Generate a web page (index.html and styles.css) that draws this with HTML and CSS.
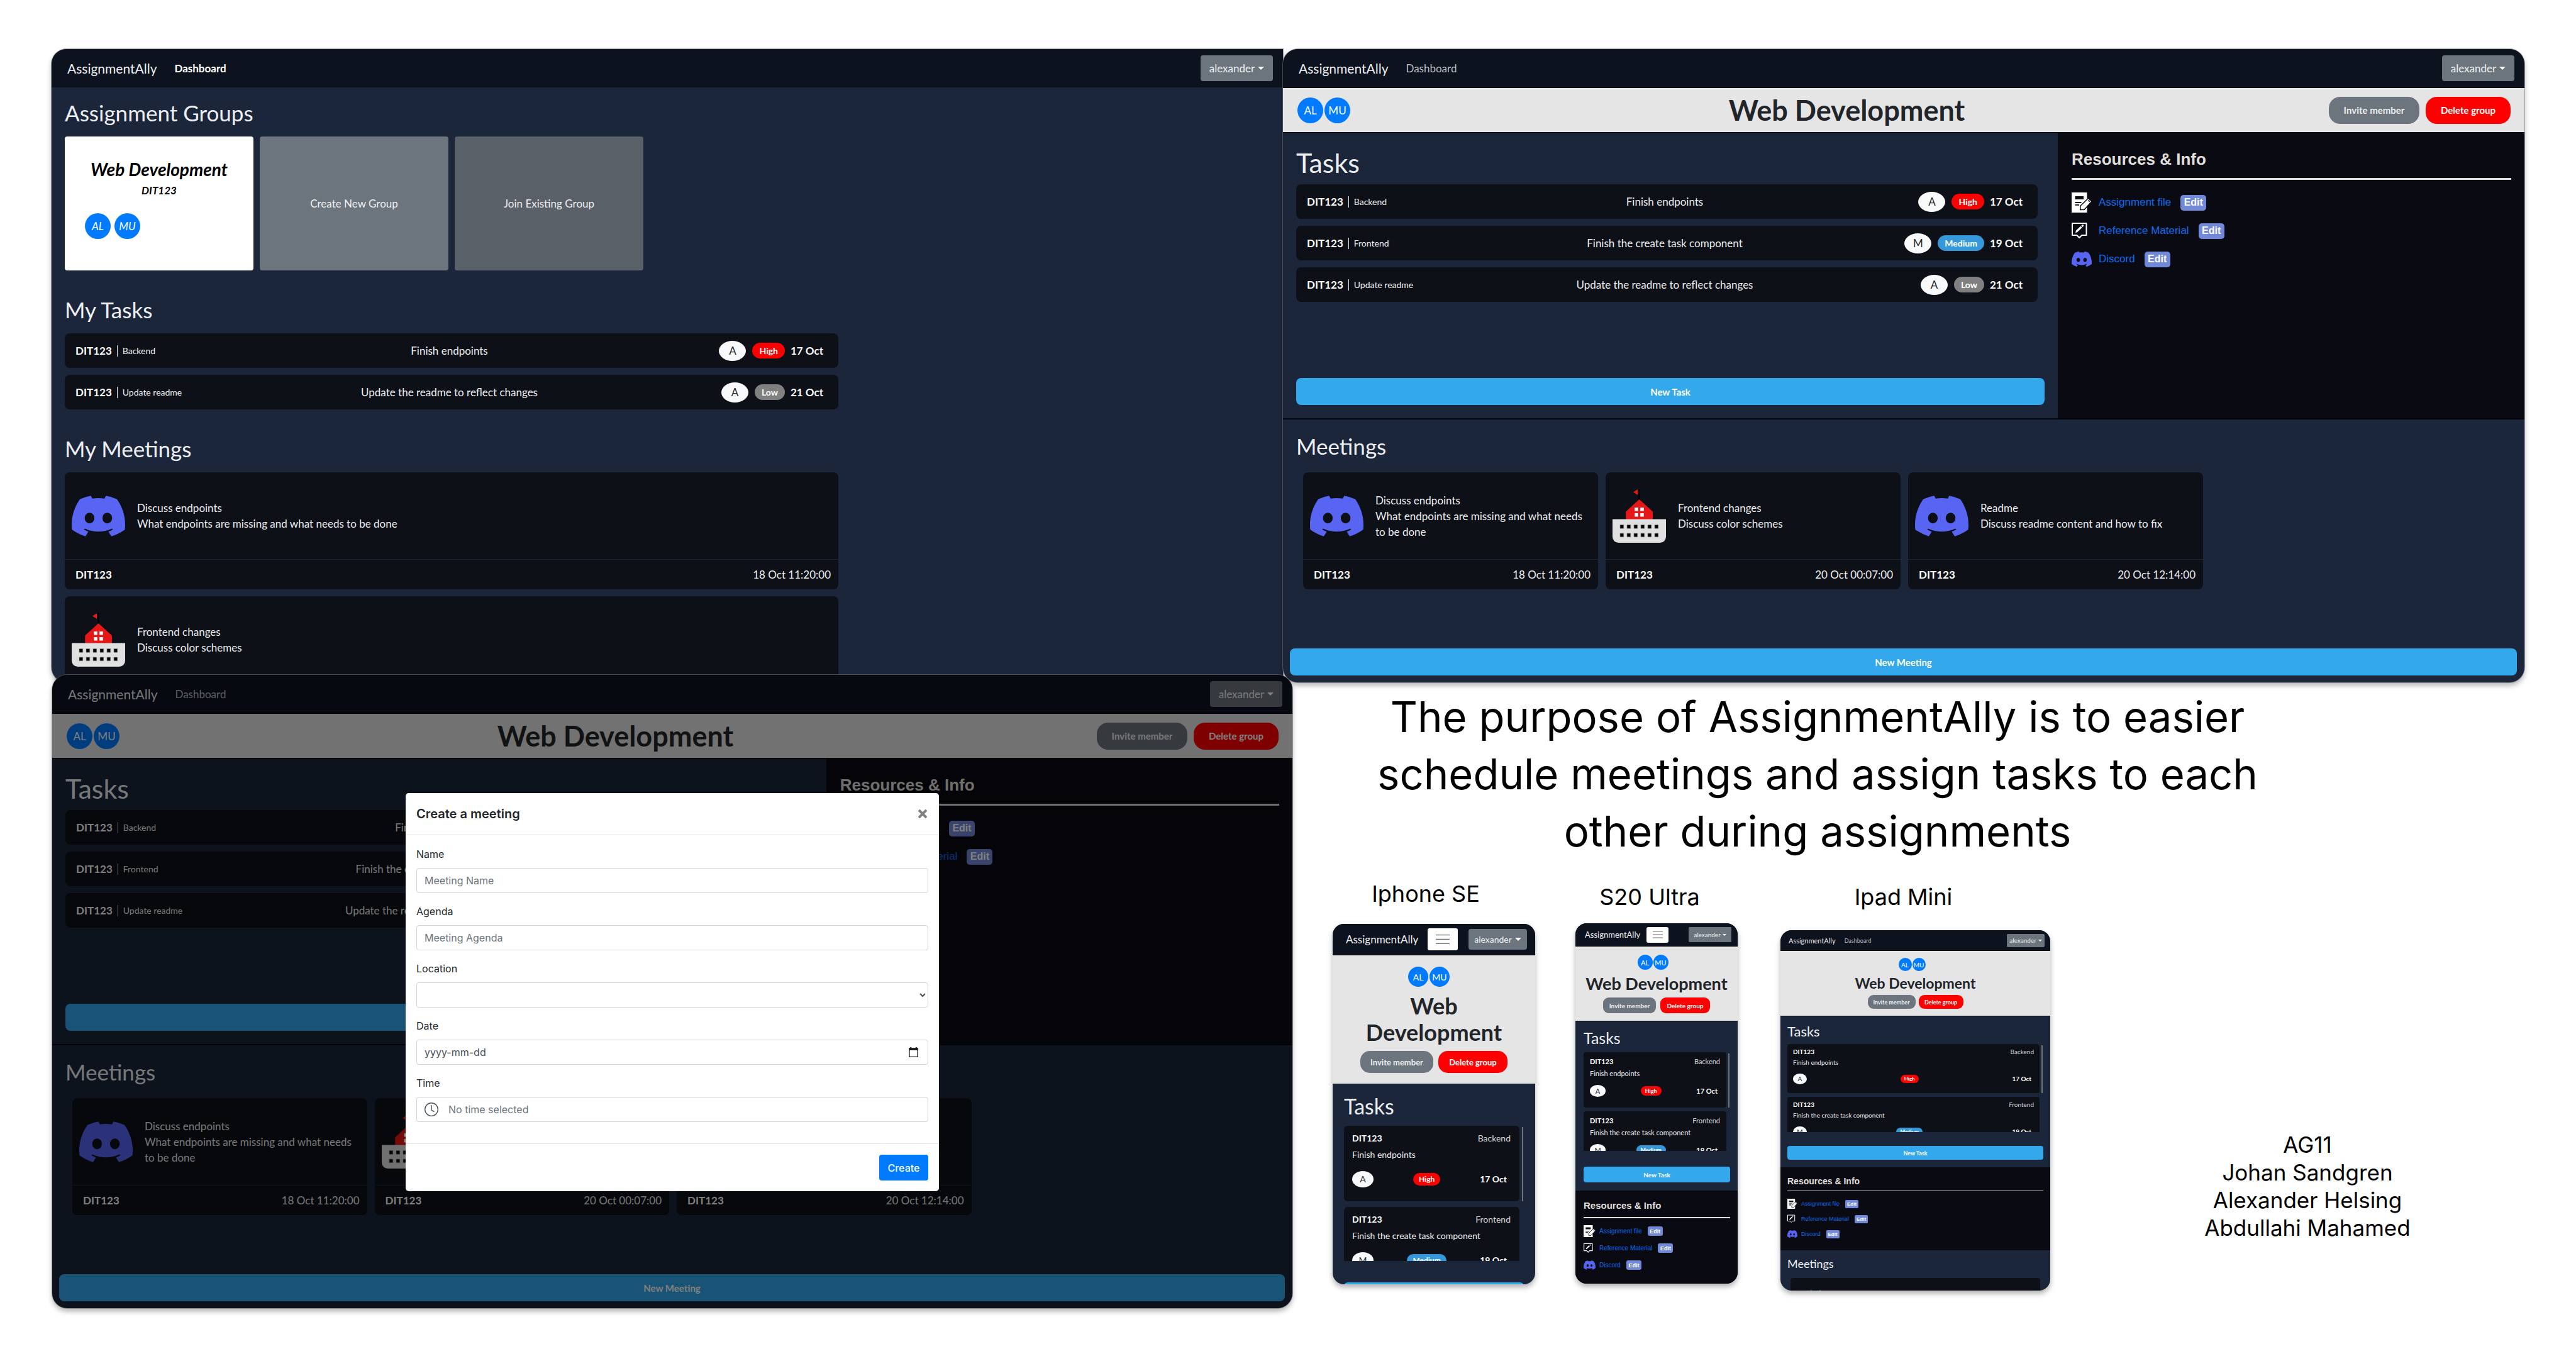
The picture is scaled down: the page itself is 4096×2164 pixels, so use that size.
FILE: index.html
```html
<!DOCTYPE html>
<html lang="en">
<head>
<meta charset="utf-8">
<meta name="viewport" content="width=device-width, initial-scale=1">
<title>AssignmentAlly</title>
<link rel="stylesheet" href="styles.css">
</head>
<body>
<svg class="sprite" aria-hidden="true">
  <symbol id="discord" viewBox="0 0 127.14 96.36"><path fill="#5865f2" d="M107.7,8.07A105.15,105.15,0,0,0,81.47,0a72.06,72.06,0,0,0-3.36,6.83A97.68,97.68,0,0,0,49,6.83,72.37,72.37,0,0,0,45.64,0,105.89,105.89,0,0,0,19.39,8.09C2.79,32.65-1.71,56.6.54,80.21h0A105.73,105.73,0,0,0,32.71,96.36,77.7,77.7,0,0,0,39.6,85.25a68.42,68.42,0,0,1-10.85-5.18c.91-.66,1.8-1.34,2.66-2a75.57,75.57,0,0,0,64.32,0c.87.71,1.76,1.39,2.66,2a68.68,68.68,0,0,1-10.87,5.19,77,77,0,0,0,6.89,11.1A105.25,105.25,0,0,0,126.6,80.22h0C129.24,52.84,122.09,29.11,107.7,8.07ZM42.45,65.69C36.18,65.69,31,60,31,53s5-12.74,11.43-12.74S54,46,53.89,53,48.84,65.69,42.45,65.69Zm42.24,0C78.41,65.69,73.25,60,73.25,53s5-12.74,11.44-12.74S96.23,46,96.12,53,91.08,65.69,84.69,65.69Z"/></symbol>
  <symbol id="school" viewBox="0 0 340 340">
    <path fill="#000" d="M165 0h10v66h-10z"/>
    <path fill="#e61717" d="M160 0v36l-28-18zM170 64l86 78v50H85v-50z"/>
    <path fill="#fff" d="M141 116h22v22h-22zM177 116h22v22h-22zM141 152h22v22h-22zM177 152h22v22h-22z"/>
    <path fill="#e0e0e0" d="M0 190h340v112a38 38 0 0 1-38 38H38a38 38 0 0 1-38-38z"/>
    <path fill="#000" stroke="#8a8a8a" stroke-width="3" d="M48 226h23v23H48zM92 226h23v23H92zM136 226h23v23h-23zM180 226h23v23h-23zM224 226h23v23h-23zM268 226h23v23h-23zM48 280h23v23H48zM92 280h23v23H92zM136 280h23v23h-23zM180 280h23v23h-23zM224 280h23v23h-23zM268 280h23v23h-23z"/>
  </symbol>
  <symbol id="file" viewBox="0 0 128 128">
    <path fill="#fff" d="M0 0h98v128H0z"/>
    <path fill="#0a0a12" d="M22 24h54v20H22zM22 60h40v8H22zM22 76h26v7H22z"/>
    <path fill="#fff" stroke="#0a0a12" stroke-width="6" d="M106 37l22 20-48 53H55V86z"/>
    <path fill="#0a0a12" d="M108 47l10 9-5 5-9-9z"/>
  </symbol>
  <symbol id="reference" viewBox="0 0 128 128">
    <path fill="none" stroke="#fff" stroke-width="8" stroke-linejoin="round" d="M4 16h90v76H65L49 108 33 92H4z"/>
    <path fill="#fff" d="M24 78l4-16 30-28 9 9-29 28zM61 31l6-6q5-3 8 1t0 9l-5 5z"/>
  </symbol>
  <symbol id="clock" viewBox="0 0 16 16"><path fill="#495057" fill-rule="evenodd" d="M8 15A7 7 0 1 0 8 1a7 7 0 0 0 0 14m8-7A8 8 0 1 1 0 8a8 8 0 0 1 16 0M7.500 3h1v5.500l3 1.700-.5.900-3.500-2z"/></symbol>
  <symbol id="calendar" viewBox="0 0 22 24"><path fill="#111" fill-rule="evenodd" d="M3 0h3v2h10V0h3v2h3v22H0V2h3zM2 7v15h18V7z"/></symbol>
</svg>

<main class="board">

  <section class="screen window window-dashboard">
    <nav class="navbar">
      <a class="brand" href="#">AssignmentAlly</a>
      <a class="nav-link active" href="#">Dashboard</a>
      <button class="user-btn" type="button">alexander</button>
    </nav>
    <div class="dashboard">
      <h2>Assignment Groups</h2>
      <div class="groups">
        <article class="group-card">
          <h3>Web Development</h3>
          <p>DIT123</p>
          <div class="members"><span>AL</span><span>MU</span></div>
        </article>
        <button class="group-card create" type="button">Create New Group</button>
        <button class="group-card join" type="button">Join Existing Group</button>
      </div>
      <h2>My Tasks</h2>
      <ul class="task-list">
        <li class="task"><div class="course"><b>DIT123</b><i></i><small>Backend</small></div><p>Finish endpoints</p><div class="meta"><span class="avatar">A</span><span class="badge high">High</span><b>17 Oct</b></div></li>
        <li class="task"><div class="course"><b>DIT123</b><i></i><small>Update readme</small></div><p>Update the readme to reflect changes</p><div class="meta"><span class="avatar">A</span><span class="badge low">Low</span><b>21 Oct</b></div></li>
      </ul>
      <h2>My Meetings</h2>
      <div class="meeting-stack">
        <article class="meeting">
          <div class="meeting-body"><svg class="place"><use href="#discord"/></svg><div><p>Discuss endpoints</p><p>What endpoints are missing and what needs to be done</p></div></div>
          <footer><b>DIT123</b><span>18 Oct 11:20:00</span></footer>
        </article>
        <article class="meeting">
          <div class="meeting-body"><svg class="place"><use href="#school"/></svg><div><p>Frontend changes</p><p>Discuss color schemes</p></div></div>
        </article>
      </div>
    </div>
  </section>

  <section class="screen window window-group">
    <nav class="navbar">
      <a class="brand" href="#">AssignmentAlly</a>
      <a class="nav-link" href="#">Dashboard</a>
      <button class="user-btn" type="button">alexander</button>
    </nav>
    <header class="group-header">
      <div class="members"><span>AL</span><span>MU</span></div>
      <h1>Web Development</h1>
      <div class="actions"><button class="pill invite" type="button">Invite member</button><button class="pill delete" type="button">Delete group</button></div>
    </header>
    <div class="workspace">
      <section class="tasks">
        <h2 class="tasks-title">Tasks</h2>
        <ul class="task-list">
          <li class="task"><div class="course"><b>DIT123</b><i></i><small>Backend</small></div><p>Finish endpoints</p><div class="meta"><span class="avatar">A</span><span class="badge high">High</span><b>17 Oct</b></div></li>
          <li class="task"><div class="course"><b>DIT123</b><i></i><small>Frontend</small></div><p>Finish the create task component</p><div class="meta"><span class="avatar">M</span><span class="badge medium">Medium</span><b>19 Oct</b></div></li>
          <li class="task"><div class="course"><b>DIT123</b><i></i><small>Update readme</small></div><p>Update the readme to reflect changes</p><div class="meta"><span class="avatar">A</span><span class="badge low">Low</span><b>21 Oct</b></div></li>
        </ul>
        <button class="wide-btn" type="button">New Task</button>
      </section>
      <aside class="resources">
        <h3>Resources &amp; Info</h3>
        <ul>
          <li><svg><use href="#file"/></svg><a href="#">Assignment file</a><button type="button">Edit</button></li>
          <li><svg><use href="#reference"/></svg><a href="#">Reference Material</a><button type="button">Edit</button></li>
          <li><svg><use href="#discord"/></svg><a href="#">Discord</a><button type="button">Edit</button></li>
        </ul>
      </aside>
    </div>
    <section class="meetings">
      <h2>Meetings</h2>
      <div class="meeting-row">
        <article class="meeting">
          <div class="meeting-body"><svg class="place"><use href="#discord"/></svg><div><p>Discuss endpoints</p><p>What endpoints are missing and what needs to be done</p></div></div>
          <footer><b>DIT123</b><span>18 Oct 11:20:00</span></footer>
        </article>
        <article class="meeting">
          <div class="meeting-body"><svg class="place"><use href="#school"/></svg><div><p>Frontend changes</p><p>Discuss color schemes</p></div></div>
          <footer><b>DIT123</b><span>20 Oct 00:07:00</span></footer>
        </article>
        <article class="meeting">
          <div class="meeting-body"><svg class="place"><use href="#discord"/></svg><div><p>Readme</p><p>Discuss readme content and how to fix</p></div></div>
          <footer><b>DIT123</b><span>20 Oct 12:14:00</span></footer>
        </article>
      </div>
      <button class="wide-btn" type="button">New Meeting</button>
    </section>
  </section>

  <section class="screen window window-modal">
    <nav class="navbar">
      <a class="brand" href="#">AssignmentAlly</a>
      <a class="nav-link" href="#">Dashboard</a>
      <button class="user-btn" type="button">alexander</button>
    </nav>
    <header class="group-header">
      <div class="members"><span>AL</span><span>MU</span></div>
      <h1>Web Development</h1>
      <div class="actions"><button class="pill invite" type="button">Invite member</button><button class="pill delete" type="button">Delete group</button></div>
    </header>
    <div class="workspace">
      <section class="tasks">
        <h2 class="tasks-title">Tasks</h2>
        <ul class="task-list">
          <li class="task"><div class="course"><b>DIT123</b><i></i><small>Backend</small></div><p>Finish endpoints</p><div class="meta"><span class="avatar">A</span><span class="badge high">High</span><b>17 Oct</b></div></li>
          <li class="task"><div class="course"><b>DIT123</b><i></i><small>Frontend</small></div><p>Finish the create task component</p><div class="meta"><span class="avatar">M</span><span class="badge medium">Medium</span><b>19 Oct</b></div></li>
          <li class="task"><div class="course"><b>DIT123</b><i></i><small>Update readme</small></div><p>Update the readme to reflect changes</p><div class="meta"><span class="avatar">A</span><span class="badge low">Low</span><b>21 Oct</b></div></li>
        </ul>
        <button class="wide-btn" type="button">New Task</button>
      </section>
      <aside class="resources">
        <h3>Resources &amp; Info</h3>
        <ul>
          <li><svg><use href="#file"/></svg><a href="#">Assignment file</a><button type="button">Edit</button></li>
          <li><svg><use href="#reference"/></svg><a href="#">Reference Material</a><button type="button">Edit</button></li>
        </ul>
      </aside>
    </div>
    <section class="meetings">
      <h2>Meetings</h2>
      <div class="meeting-row">
        <article class="meeting">
          <div class="meeting-body"><svg class="place"><use href="#discord"/></svg><div><p>Discuss endpoints</p><p>What endpoints are missing and what needs to be done</p></div></div>
          <footer><b>DIT123</b><span>18 Oct 11:20:00</span></footer>
        </article>
        <article class="meeting">
          <div class="meeting-body"><svg class="place"><use href="#school"/></svg></div>
          <footer><b>DIT123</b><span>20 Oct 00:07:00</span></footer>
        </article>
        <article class="meeting">
          <div class="meeting-body"></div>
          <footer><b>DIT123</b><span>20 Oct 12:14:00</span></footer>
        </article>
      </div>
      <button class="wide-btn" type="button">New Meeting</button>
    </section>
    <div class="backdrop">
      <form class="modal" role="dialog" aria-labelledby="modal-title">
        <header><h2 id="modal-title">Create a meeting</h2><button class="close" type="button" aria-label="Close"><svg viewBox="0 0 14 14"><path stroke="#7f7f7f" stroke-width="4" d="M1 1l12 12M13 1L1 13"/></svg></button></header>
        <div class="fields">
          <label for="m-name">Name</label>
          <input id="m-name" type="text" placeholder="Meeting Name">
          <label for="m-agenda">Agenda</label>
          <input id="m-agenda" type="text" placeholder="Meeting Agenda">
          <label for="m-location">Location</label>
          <div class="field"><select id="m-location"><option></option></select><svg class="chevron" viewBox="0 0 10 7"><path fill="none" stroke="#495057" stroke-width="2" d="M1 1l4 4 4-4"/></svg></div>
          <label for="m-date">Date</label>
          <div class="field"><input id="m-date" class="date" type="text" placeholder="yyyy-mm-dd"><svg class="calendar"><use href="#calendar"/></svg></div>
          <label for="m-time">Time</label>
          <div class="field"><input id="m-time" class="time" type="text" placeholder="No time selected"><svg class="clock"><use href="#clock"/></svg></div>
        </div>
        <footer><button type="submit">Create</button></footer>
      </form>
    </div>
  </section>

  <section class="summary">
    <h1 class="purpose">The purpose of AssignmentAlly is to easier schedule meetings and assign tasks to each other during assignments</h1>
    <div class="showcase">
      <figure class="device device-iphone">
        <figcaption>Iphone SE</figcaption>
        <div class="screen">
          <nav class="navbar">
            <a class="brand" href="#">AssignmentAlly</a>
            <button class="menu-btn" type="button" aria-label="Menu"><svg viewBox="0 0 48 36"><path stroke="#6f6f6f" stroke-width="3" d="M0 3h48M0 18h48M0 33h48"/></svg></button>
            <button class="user-btn" type="button">alexander</button>
          </nav>
          <header class="group-header">
            <div class="members"><span>AL</span><span>MU</span></div>
            <h1>Web Development</h1>
            <div class="actions"><button class="pill invite" type="button">Invite member</button><button class="pill delete" type="button">Delete group</button></div>
          </header>
          <section class="tasks">
            <h2 class="tasks-title">Tasks</h2>
            <ul class="task-list">
              <li class="task"><div><b>DIT123</b><span>Backend</span></div><p>Finish endpoints</p><div class="meta"><span class="avatar">A</span><span class="badge high">High</span><b>17 Oct</b></div></li>
              <li class="task"><div><b>DIT123</b><span>Frontend</span></div><p>Finish the create task component</p><div class="meta"><span class="avatar">M</span><span class="badge medium">Medium</span><b>19 Oct</b></div></li>
            </ul>
            <button class="wide-btn" type="button" aria-label="New Task"></button>
          </section>
        </div>
      </figure>

      <figure class="device device-s20">
        <figcaption>S20 Ultra</figcaption>
        <div class="screen">
          <nav class="navbar">
            <a class="brand" href="#">AssignmentAlly</a>
            <button class="menu-btn" type="button" aria-label="Menu"><svg viewBox="0 0 48 36"><path stroke="#6f6f6f" stroke-width="3" d="M0 3h48M0 18h48M0 33h48"/></svg></button>
            <button class="user-btn" type="button">alexander</button>
          </nav>
          <header class="group-header">
            <div class="members"><span>AL</span><span>MU</span></div>
            <h1>Web Development</h1>
            <div class="actions"><button class="pill invite" type="button">Invite member</button><button class="pill delete" type="button">Delete group</button></div>
          </header>
          <section class="tasks">
            <h2 class="tasks-title">Tasks</h2>
            <ul class="task-list">
              <li class="task"><div><b>DIT123</b><span>Backend</span></div><p>Finish endpoints</p><div class="meta"><span class="avatar">A</span><span class="badge high">High</span><b>17 Oct</b></div></li>
              <li class="task"><div><b>DIT123</b><span>Frontend</span></div><p>Finish the create task component</p><div class="meta"><span class="avatar">M</span><span class="badge medium">Medium</span><b>19 Oct</b></div></li>
            </ul>
            <button class="wide-btn" type="button">New Task</button>
          </section>
          <aside class="resources">
            <h3>Resources &amp; Info</h3>
            <ul>
              <li><svg><use href="#file"/></svg><a href="#">Assignment file</a><button type="button">Edit</button></li>
              <li><svg><use href="#reference"/></svg><a href="#">Reference Material</a><button type="button">Edit</button></li>
              <li><svg><use href="#discord"/></svg><a href="#">Discord</a><button type="button">Edit</button></li>
            </ul>
          </aside>
        </div>
      </figure>

      <figure class="device device-ipad">
        <figcaption>Ipad Mini</figcaption>
        <div class="screen">
          <nav class="navbar">
            <a class="brand" href="#">AssignmentAlly</a>
            <a class="nav-link" href="#">Dashboard</a>
            <button class="user-btn" type="button">alexander</button>
          </nav>
          <header class="group-header">
            <div class="members"><span>AL</span><span>MU</span></div>
            <h1>Web Development</h1>
            <div class="actions"><button class="pill invite" type="button">Invite member</button><button class="pill delete" type="button">Delete group</button></div>
          </header>
          <section class="tasks">
            <h2 class="tasks-title">Tasks</h2>
            <ul class="task-list">
              <li class="task"><div><b>DIT123</b><span>Backend</span></div><p>Finish endpoints</p><div class="meta"><span class="avatar">A</span><span class="badge high">High</span><b>17 Oct</b></div></li>
              <li class="task"><div><b>DIT123</b><span>Frontend</span></div><p>Finish the create task component</p><div class="meta"><span class="avatar">M</span><span class="badge medium">Medium</span><b>19 Oct</b></div></li>
            </ul>
            <button class="wide-btn" type="button">New Task</button>
          </section>
          <aside class="resources">
            <h3>Resources &amp; Info</h3>
            <ul>
              <li><svg><use href="#file"/></svg><a href="#">Assignment file</a><button type="button">Edit</button></li>
              <li><svg><use href="#reference"/></svg><a href="#">Reference Material</a><button type="button">Edit</button></li>
              <li><svg><use href="#discord"/></svg><a href="#">Discord</a><button type="button">Edit</button></li>
            </ul>
          </aside>
          <section class="meetings">
            <h2>Meetings</h2>
            <div class="meeting-peek"><svg><use href="#discord"/></svg></div>
          </section>
        </div>
      </figure>

      <p class="authors">AG11<br>Johan Sandgren<br>Alexander Helsing<br>Abdullahi Mahamed</p>
    </div>
  </section>
</main>
</body>
</html>
```

FILE: styles.css
```css
*, *::before, *::after { box-sizing: border-box; }
body { margin: 0; background: #fff; color: #000; font-family: Inter, "Liberation Sans", sans-serif; }
h1, h2, h3, p, ul, figure { margin: 0; padding: 0; }
ul { list-style: none; }
a { text-decoration: none; color: inherit; }
button, input, select { font: inherit; }
button { border: 0; padding: 0; cursor: pointer; }
.sprite { display: none; }
svg { display: block; flex: none; }

/* Board: two columns of app windows */
.board {
  display: grid;
  grid-template-columns: 1958fr 1974fr;
  padding: 78px 82px 60px;
}

/* Shared app look; sizes come from variables so each device can set its own */
.screen {
  --brand: 21px;
  --text: 17px;
  --small: 14px;
  --strong: 15px;
  --heading: 45px;
  --title: 43px;
  --section: 35px;
  --circle: 41px;
  --nav-h: 61px;
  --user-w: 115px;
  --user-h: 41px;
  --pill-h: 43px;
  --radius: 8px;
  position: relative;
  overflow: hidden;
  background: #1b263b;
  color: #eceef1;
  font-family: Lato, "Liberation Sans", sans-serif;
  font-size: var(--text);
}
.window { border-radius: 24px; box-shadow: 0 0 0 1px rgba(110, 114, 122, .6), 0 5px 8px rgba(0, 0, 0, .3); }
.window-dashboard { contain: size; margin-bottom: -12px; border-radius: 24px 0 0 24px; }
.window-group { margin-bottom: -12px; z-index: 1; }
.window-modal { z-index: 2; margin: 0 -15px 0 1px; }

.navbar { display: flex; align-items: center; height: var(--nav-h); padding: 0 16px 0 25px; background: #0c121e; }
.brand { font-size: var(--brand); }
.nav-link { margin-left: 28px; color: #b9bdc4; }
.nav-link.active { color: #fff; font-weight: 700; }
.user-btn {
  display: flex; align-items: center; justify-content: center; gap: 5px;
  width: var(--user-w); height: var(--user-h); margin-left: auto;
  border-radius: 4px; background: #6c757d; color: #eceef1;
}
.user-btn::after { content: ""; border: 5px solid transparent; border-top-color: #fff; border-bottom: 0; }

.members { display: flex; gap: 2px; }
.members span {
  display: flex; align-items: center; justify-content: center;
  width: var(--circle); height: var(--circle); border-radius: 50%;
  background: #007bff; color: #fff;
}

.group-header {
  display: flex; align-items: center; justify-content: space-between;
  height: 73px; padding: 0 22px 0 23px;
  background: #e5e5e5; border-top: 1px solid #000; border-bottom: 2px solid #0a0e16; color: #212529;
}
.group-header .members { padding-right: 23px; }
.group-header h1 { font-size: var(--heading); font-weight: 700; line-height: 50px; }
.actions { display: flex; gap: 10px; }
.pill { height: var(--pill-h); border-radius: 18px; color: #fff; font-size: var(--strong); font-weight: 700; }
.invite { width: 144px; background: #6c757d; color: #eceef1; }
.delete { width: 135px; background: #f00; }

.workspace { display: grid; grid-template-columns: 1232fr 742fr; min-height: 455px; border-bottom: 2px solid #05070c; }
.tasks { display: flex; flex-direction: column; padding: 22px 21px 21px; }
.tasks-title { margin-bottom: 9px; font-size: var(--title); font-weight: 400; line-height: 50px; }
.task-list { display: flex; flex-direction: column; gap: 11px; }
.tasks .task-list { padding-right: 11px; }
.window .task {
  display: grid; grid-template-columns: 1fr auto 1fr; align-items: center;
  height: 55px; padding: 0 24px 0 17px;
}
.task { border-radius: var(--radius); background: #0d1117; }
.task b { color: #fff; }
.course { display: flex; align-items: center; gap: 8px; }
.course i { width: 1px; height: 18px; background: #eceef1; }
.course small { font-size: var(--small); }
.meta { display: flex; align-items: center; justify-content: flex-end; gap: 9px; }
.avatar {
  display: flex; align-items: center; justify-content: center;
  width: 43px; height: 32px; margin-right: 1px; border-radius: 50%;
  background: #f8f9fa; color: #212529;
}
.badge { display: flex; align-items: center; height: 25px; padding: 0 11px; border-radius: 13px; color: #fff; font-size: var(--small); font-weight: 700; }
.high { background: #f00; }
.medium { background: #3498db; }
.low { background: #808080; }
.wide-btn {
  width: 100%; height: var(--pill-h); margin-top: auto;
  border-radius: var(--radius); background: #33a8ec; color: #fff;
  font-size: var(--strong); font-weight: 700;
}

.resources { padding: 25px 21px 0 22px; background: #0a0a12; font-family: "Liberation Sans", Arial, sans-serif; }
.resources h3 { padding-bottom: 14px; border-bottom: 3px solid #e0dfdc; color: #e0dfdc; font-size: 26px; line-height: 32px; }
.resources ul { display: flex; flex-direction: column; gap: 13px; padding-top: 20px; }
.resources li { display: flex; align-items: center; gap: 11px; font-size: 17px; }
.resources svg { width: 32px; height: 32px; }
.resources a { color: #0a6df0; }
.resources button {
  width: 41px; height: 25px; margin-left: 4px; border-radius: 5px;
  background: #7289da; color: #fff; font-size: 16px; font-weight: 700;
}

.meetings { padding: 22px 12px 11px 11px; }
.meetings h2, .dashboard h2 { font-size: var(--section); font-weight: 400; line-height: 40px; }
.meetings h2 { margin: 0 0 22px 10px; }
.meeting-row { display: grid; grid-template-columns: repeat(3, 469fr) 487fr; gap: 12px; margin: 0 0 94px 21px; }
.meeting { border-radius: var(--radius); background: #0d1117; line-height: 25px; }
.meeting-body { display: flex; align-items: center; gap: 19px; height: 138px; padding: 0 10px 0 11px; }
.place { width: 85px; height: 85px; }
.meeting footer { display: flex; align-items: center; justify-content: space-between; height: 48px; padding: 0 12px 0 17px; border-top: 1px solid #1b263b; }
.meeting b { color: #fff; }

.dashboard { padding: 20px 21px; }
.dashboard h2 { margin-bottom: 18px; }
.groups { display: flex; gap: 10px; margin-bottom: 42px; }
.group-card { width: 300px; height: 213px; border-radius: 4px; color: #eceef1; }
article.group-card { padding: 36px 32px 0; background: #fff; color: #000; font-style: italic; text-align: center; }
.group-card h3 { font-size: 28px; line-height: 32px; }
.group-card p { margin: 6px 0 24px; font-weight: 700; line-height: 24px; }
.group-card .members { gap: 6px; }
.create { background: #6c757d; }
.join { background: #5a6067; }
.dashboard .task-list { margin-bottom: 42px; }
.dashboard .task-list, .meeting-stack { width: 1230px; max-width: 100%; }
.meeting-stack { display: grid; gap: 11px; }
.meeting-stack .meeting { min-height: 186px; }

/* Modal */
.backdrop {
  position: absolute; inset: 0; display: flex; justify-content: center; align-items: flex-start;
  padding-top: 188px; background: rgba(0, 0, 0, .5);
}
.modal { width: 43%; border-radius: 5px; background: #fff; color: #212529; font-family: Inter, "Liberation Sans", sans-serif; font-size: 16px; }
.modal header { display: flex; align-items: center; justify-content: space-between; height: 67px; padding: 0 17px; border-bottom: 1px solid #dee2e6; }
.modal h2 { font-size: 20px; font-weight: 600; }
.close { width: 16px; height: 18px; background: none; }
.close svg { width: 14px; height: 14px; }
.fields { display: grid; padding: 17px 17px 18px; }
.modal label { height: 26px; margin-bottom: 9px; line-height: 26px; }
.modal input, .modal select {
  width: 100%; height: 40px; margin: 0 0 16px; padding: 0 12px;
  border: 1px solid #ced4da; border-radius: 4px; background: #fff; color: #495057; appearance: none;
}
.modal ::placeholder { color: #6c757d; opacity: 1; }
.modal .date::placeholder { color: #495057; }
.modal .time { padding-left: 50px; }
.field { position: relative; }
.field svg { position: absolute; }
.chevron { width: 10px; height: 7px; right: 4px; top: 17px; }
.calendar { width: 15px; height: 16px; right: 16px; top: 12px; }
.clock { width: 22px; height: 22px; left: 13px; top: 9px; }
.modal footer { display: flex; justify-content: flex-end; padding: 17px; border-top: 1px solid #dee2e6; }
.modal footer button { width: 78px; height: 41px; border-radius: 4px; background: #007bff; color: #fff; font-weight: 500; }

/* Summary */
.summary { padding: 21px 0 0 15px; }
.purpose { max-width: 1670px; padding: 0 100px; font-size: 67px; font-weight: 400; line-height: 91px; text-align: center; }
.showcase { display: flex; align-items: flex-start; gap: 64px; padding: 32px 0 0 64px; }
.device { flex: none; }
.device figcaption { padding-right: 26px; font-size: 36px; line-height: 44px; text-align: center; white-space: nowrap; }
.device .screen { display: flex; flex-direction: column; height: 573px; border-radius: 18px; box-shadow: 0 5px 8px rgba(0, 0, 0, .3); }
.device .screen > * { flex: none; }
.authors { flex: 1; align-self: flex-end; padding-bottom: 78px; font-size: 35px; line-height: 44px; text-align: center; }

.menu-btn { display: flex; align-items: center; justify-content: center; border-radius: 3px; background: #fff; }
.device .group-header { flex-direction: column; height: auto; border-width: 1px 0; }
.device .task-list { position: relative; overflow: hidden; }
.device .task-list::after { content: ""; position: absolute; top: 2px; right: 1px; width: 2px; background: #6f737a; }
.device .task { flex: none; }
.device .task > div { display: flex; justify-content: space-between; }
.device .task .meta { align-items: center; }
.device .task span:not(.avatar):not(.badge) { color: #d3d6da; }
.device .avatar { margin: 0; }
.device .wide-btn { flex: none; margin-top: 0; }

.device-iphone { width: 322px; }
.device-iphone .screen {
  --brand: 17px; --text: 14px; --small: 12px; --strong: 13px; --heading: 36px; --title: 34px;
  --circle: 32px; --nav-h: 49px; --user-w: 93px; --user-h: 33px; --pill-h: 35px; --radius: 6px;
  margin-top: 26px;
}
.device-iphone .navbar { padding: 0 13px 0 21px; }
.device-iphone .menu-btn { width: 48px; height: 35px; margin-left: 15px; }
.device-iphone .menu-btn svg { width: 22px; height: 17px; }
.device-iphone .group-header { padding: 18px 36px 17px; gap: 9px; }
.device-iphone .group-header .members { padding-right: 16px; }
.device-iphone .group-header h1 { line-height: 42px; text-align: center; }
.device-iphone .actions { gap: 8px; }
.device-iphone .pill { border-radius: 15px; }
.device-iphone .invite { width: 116px; }
.device-iphone .delete { width: 110px; }
.device-iphone .tasks { padding: 15px 18px 0; }
.device-iphone .tasks-title { margin-bottom: 11px; line-height: 40px; }
.device-iphone .task-list { height: 215px; gap: 9px; margin-bottom: 34px; padding-right: 7px; }
.device-iphone .task-list::after { height: 118px; }
.device-iphone .task { height: 120px; padding: 7px 14px 0 13px; line-height: 26px; }
.device-iphone .meta { margin-top: 13px; padding-right: 6px; }
.device-iphone .avatar { width: 34px; height: 26px; }
.device-iphone .badge { height: 20px; padding: 0 9px; }

.device-s20 { width: 258px; margin-top: 5px; }
.device-s20 .screen {
  --brand: 13px; --text: 11px; --small: 9px; --strong: 10px; --heading: 27px; --title: 25px;
  --circle: 24px; --nav-h: 36px; --user-w: 68px; --user-h: 24px; --pill-h: 25px; --radius: 4px;
  margin-top: 20px;
}
.device-s20 figcaption { padding-right: 22px; }
.device-s20 .navbar { padding: 0 10px 0 15px; }
.device-s20 .menu-btn { width: 35px; height: 25px; margin-left: 10px; }
.device-s20 .menu-btn svg { width: 16px; height: 12px; }
.device-s20 .user-btn, .device-ipad .user-btn { gap: 3px; border-radius: 2px; font-size: 10px; }
.device-s20 .user-btn::after, .device-ipad .user-btn::after { border-width: 3px 3px 0; }
.device-s20 .group-header { padding: 13px 0 12px; gap: 7px; }
.device-s20 .group-header .members { gap: 1px; padding-right: 12px; }
.device-s20 .group-header h1 { line-height: 30px; }
.device-s20 .actions { gap: 7px; }
.device-s20 .pill, .device-ipad .pill { border-radius: 9px; }
.device-s20 .invite { width: 84px; }
.device-s20 .delete { width: 79px; }
.device-s20 .tasks { padding: 11px 12px 13px 13px; }
.device-s20 .tasks-title { margin-bottom: 8px; line-height: 30px; }
.device-s20 .task-list { height: 157px; gap: 6px; margin-bottom: 25px; padding-right: 6px; }
.device-s20 .task-list::after { height: 86px; }
.device-s20 .task { height: 88px; padding: 5px 10px 0; line-height: 19px; }
.device-s20 .meta { margin-top: 9px; padding-right: 4px; }
.device-s20 .avatar { width: 25px; height: 19px; }
.device-s20 .badge { height: 15px; padding: 0 7px; }
.device-s20 .screen .resources { flex: 1; padding: 14px 12px 0 13px; }
.device-s20 .resources h3 { padding-bottom: 8px; border-width: 2px; font-size: 15px; line-height: 20px; }
.device-s20 .resources ul { gap: 8px; padding-top: 11px; }
.device-s20 .resources li { gap: 6px; font-size: 10px; }
.device-s20 .resources svg { width: 19px; height: 19px; }
.device-s20 .resources button { width: 24px; height: 15px; margin-left: 3px; border-radius: 3px; font-size: 9px; }

.device-ipad { width: 429px; margin: 5px 0 0 4px; }
.device-ipad .screen {
  --brand: 11px; --text: 10px; --small: 8px; --strong: 9px; --heading: 23px; --title: 22px; --section: 18px;
  --circle: 21px; --nav-h: 32px; --user-w: 60px; --user-h: 21px; --pill-h: 22px; --radius: 4px;
  margin-top: 31px;
}
.device-ipad figcaption { padding-right: 38px; }
.device-ipad .navbar { padding: 0 9px 0 13px; }
.device-ipad .nav-link { margin-left: 14px; font-size: 9px; }
.device-ipad .group-header { padding: 11px 0; gap: 6px; }
.device-ipad .group-header .members { gap: 1px; padding-right: 11px; }
.device-ipad .group-header h1 { line-height: 26px; }
.device-ipad .actions { gap: 5px; }
.device-ipad .invite { width: 76px; }
.device-ipad .delete { width: 71px; }
.device-ipad .tasks { padding: 11px 11px 12px; }
.device-ipad .tasks-title { margin-bottom: 7px; line-height: 26px; }
.device-ipad .task-list { height: 140px; gap: 6px; margin-bottom: 22px; padding-right: 6px; }
.device-ipad .task-list::after { height: 76px; }
.device-ipad .task { height: 78px; padding: 4px 9px 0; line-height: 17px; }
.device-ipad .meta { margin-top: 9px; padding-right: 4px; }
.device-ipad .avatar { width: 22px; height: 17px; }
.device-ipad .badge { height: 13px; padding: 0 6px; }
.device-ipad .resources { padding: 13px 11px 18px; }
.device-ipad .resources h3 { padding-bottom: 6px; border-width: 1px; font-size: 14px; line-height: 18px; }
.device-ipad .resources ul { gap: 8px; padding-top: 12px; }
.device-ipad .resources li { gap: 6px; font-size: 9px; }
.device-ipad .resources svg { width: 16px; height: 16px; }
.device-ipad .resources button { width: 21px; height: 13px; margin-left: 3px; border-radius: 2px; font-size: 8px; }
.device-ipad .meetings { padding: 10px 16px 0; }
.device-ipad .meetings h2 { margin: 0 0 12px -5px; line-height: 22px; }
.meeting-peek { height: 90px; padding: 19px 18px; border-radius: 4px; background: #0d1117; }
.meeting-peek svg { width: 44px; height: 34px; }
```
